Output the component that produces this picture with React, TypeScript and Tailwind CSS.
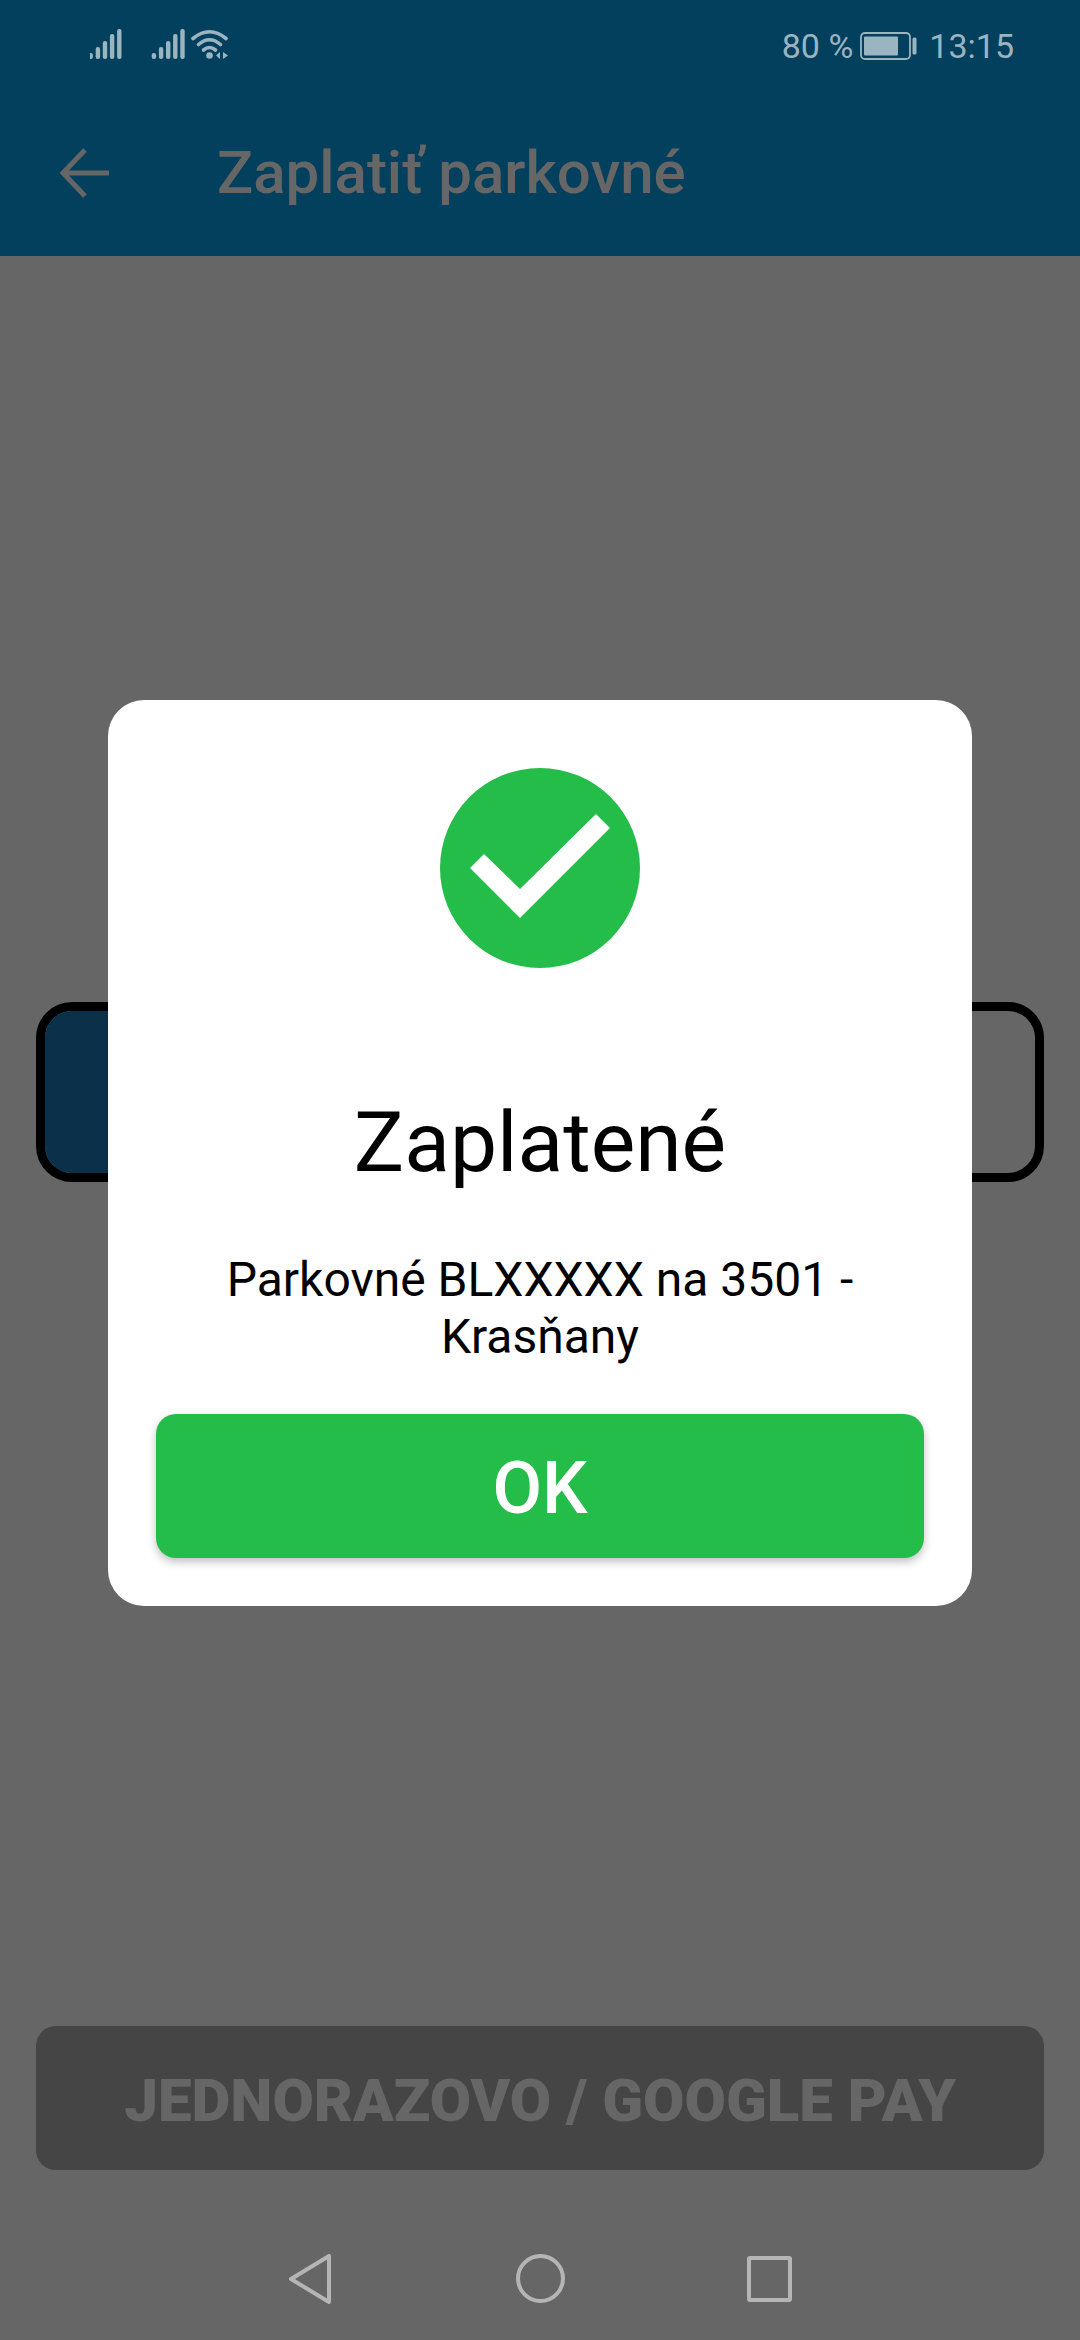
export default function App() {
  const bars = [
    [90.7, 53],
    [97.9, 47],
    [105, 41],
    [112.1, 34],
    [119.3, 29],
  ];
  return (
    <div className="relative flex h-[2340px] w-[1080px] flex-col overflow-hidden bg-[#666666] font-['Roboto',sans-serif]">
      <header className="flex h-[256px] flex-col bg-[#03405e]">
        <div className="flex h-[90px] items-start justify-between pl-[90px] pr-[66px] pt-[28px]">
          <svg width="146" height="34" viewBox="90 28 146 34">
            {bars.map(([x, y]) => (
              <rect key={x} x={x - 2.2} y={y} width="4.4" height={59 - y} rx="2" fill="#9ab4c0" />
            ))}
            {bars.map(([x, y]) => (
              <rect key={x} x={x + 61} y={y} width="4.4" height={59 - y} rx="2" fill="#9ab4c0" />
            ))}
            <g fill="none" stroke="#9ab4c0" strokeWidth="3.6" strokeLinecap="round">
              <path d="M193 38.5Q209.500 25 226 38.500" />
              <path d="M198.500 44.500Q209.500 35 220.500 44.500" />
              <path d="M203.500 50Q209.500 45 215.500 50" />
            </g>
            <circle cx="209.500" cy="55.500" r="3.300" fill="#9ab4c0" />
            <path d="M220 52L220 59L216 55.500ZM223 52L223 59L228 55.500Z" fill="#9ab4c0" />
          </svg>
          <div className="flex items-center text-[34px] leading-[36px] text-[#9ab4c0]">
            <span>80 %</span>
            <svg width="57" height="28" viewBox="0 0 57 28" className="ml-[7px]">
              <rect x="1" y="1" width="49" height="26" rx="4" fill="none" stroke="#9ab4c0" strokeWidth="1.800" />
              <rect x="4" y="4.500" width="34" height="19" rx="1" fill="#9ab4c0" />
              <rect x="52.500" y="5.500" width="4" height="17" rx="1.500" fill="#9ab4c0" />
            </svg>
            <span className="ml-[12px]">13:15</span>
          </div>
        </div>
        <div className="flex flex-1 items-center">
          <svg width="52" height="52" viewBox="0 0 52 52" className="ml-[59px]">
            <path d="M50 26H4M26 3L4 26L26 49" fill="none" stroke="#666666" strokeWidth="5" />
          </svg>
          <h1 className="ml-[106px] text-[60px] font-medium leading-[70px] text-[#666666]">Zaplatiť parkovné</h1>
        </div>
      </header>

      <main className="flex flex-1 flex-col px-[36px]">
        <div className="mt-[746px] h-[180px] overflow-hidden rounded-[36px] border-[9px] border-black">
          <div className="h-full w-1/2 bg-[#0a304a]" />
        </div>
        <button className="mt-[844px] h-[144px] rounded-[20px] bg-[#454545] pt-[5px] text-[60px] font-black leading-[60px] text-[#666666]">
          JEDNORAZOVO / GOOGLE PAY
        </button>
      </main>

      <nav className="flex h-[170px] items-start justify-center pt-[84px]">
        <svg width="52" height="50" viewBox="0 0 52 50" className="mr-[175px]">
          <path d="M40 2L40 48L2 25Z" fill="none" stroke="#b5b5b5" strokeWidth="4" strokeLinejoin="round" />
        </svg>
        <div className="h-[49px] w-[49px] rounded-full border-[4px] border-[#b5b5b5]" />
        <div className="ml-[182px] mt-[2px] h-[46px] w-[45px] rounded-[3px] border-[4px] border-[#b5b5b5]" />
      </nav>

      <div className="absolute left-[108px] top-[700px] flex h-[906px] w-[864px] flex-col items-center rounded-[36px] bg-white px-[48px] pt-[68px] text-black">
        <div className="flex h-[200px] w-[200px] items-center justify-center rounded-full bg-[#24bd4a]">
          <svg width="140" height="104" viewBox="0 0 140 104" className="mb-[4px]">
            <path d="M126 0L140 14L50 104L0 54L14 40L50 75Z" fill="#ffffff" />
          </svg>
        </div>
        <h2 className="mt-[126px] text-[84px] font-normal leading-[98px]">Zaplatené</h2>
        <p className="mt-[59px] text-center text-[48px] leading-[57px]">Parkovné BLXXXXX na 3501 - Krasňany</p>
        <button className="mt-[49px] h-[144px] w-full rounded-[20px] bg-[#24bd4a] pt-[5px] text-[72px] font-medium leading-[80px] text-white shadow-[0_4px_8px_rgba(0,0,0,0.25)]">
          OK
        </button>
      </div>
    </div>
  );
}
